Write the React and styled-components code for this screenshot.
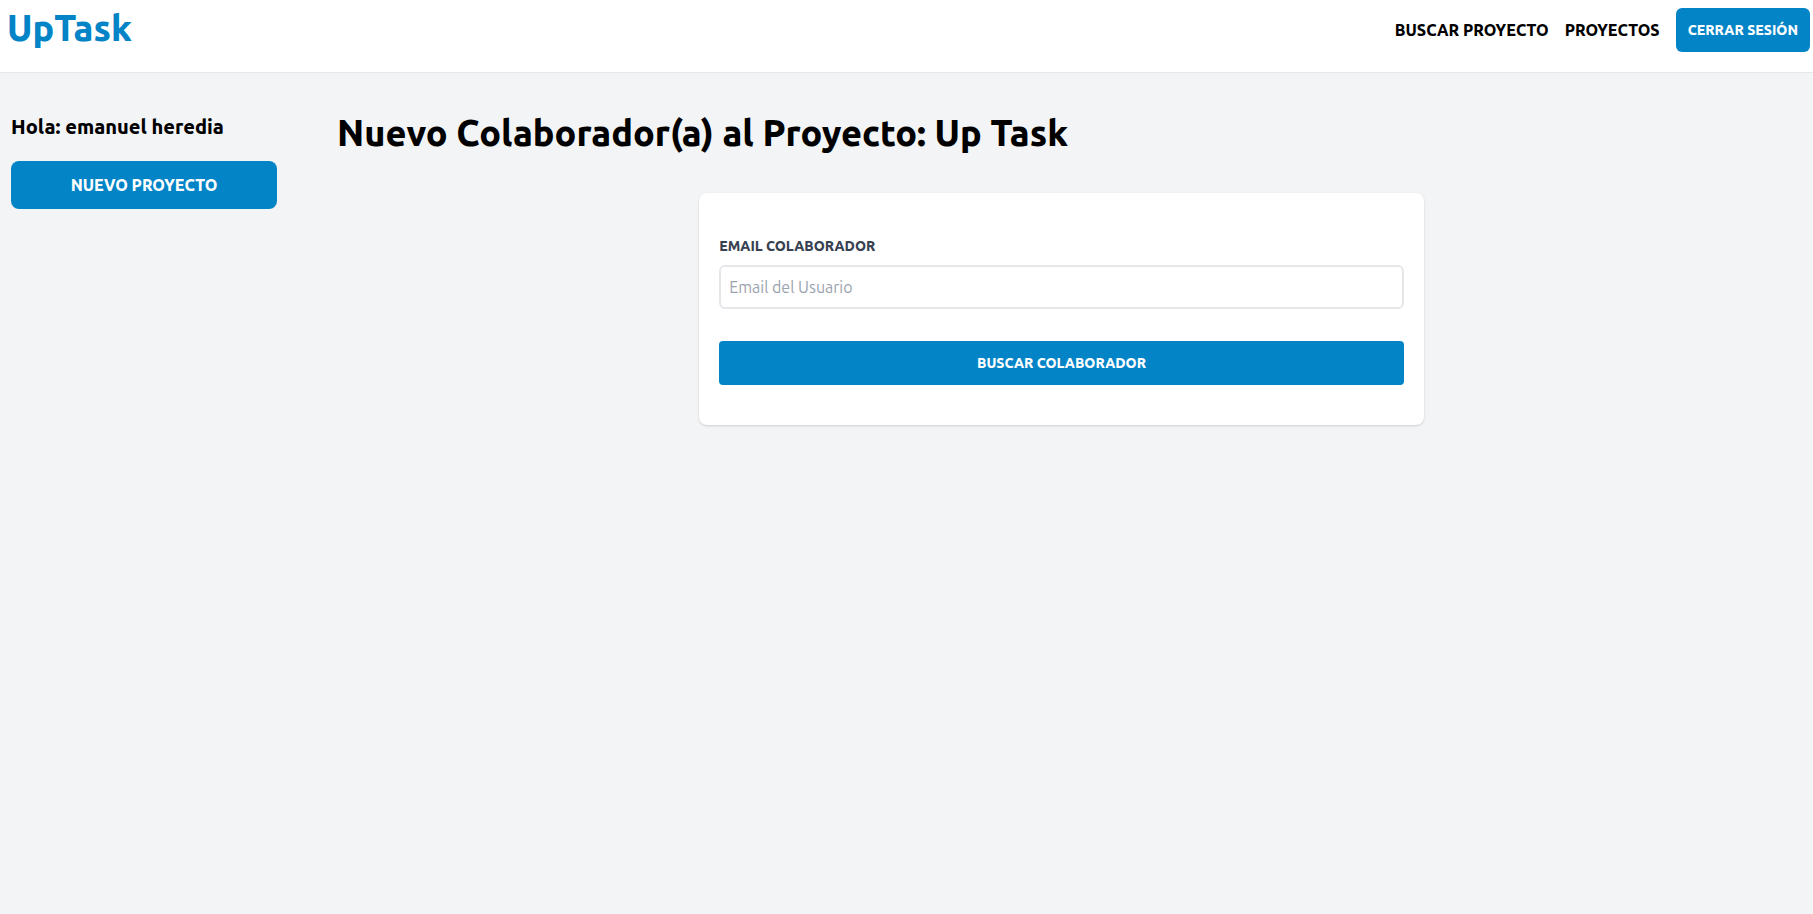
import React from "react";
import styled, { createGlobalStyle, css } from "styled-components";

const GlobalStyle = createGlobalStyle`
  *, *::before, *::after { box-sizing: border-box; }
  body {
    margin: 0;
    background: #f3f4f6;
    color: #000;
    font-family: Ubuntu, "Noto Sans", "Open Sans", sans-serif;
    font-size: 16px;
    line-height: 24px;
  }
  h1, h2, p { margin: 0; }
`;

const filled = css`
  border: 0;
  background: #0284c7;
  color: #fff;
  font-family: inherit;
  font-weight: 800;
  text-align: center;
  text-transform: uppercase;
  text-decoration: none;
  cursor: pointer;
  &:hover { background: #0369a1; }
`;

const Header = styled.header`
  display: flex;
  justify-content: space-between;
  align-items: flex-start;
  padding: 8px 3px 20px 7px;
  background: #fff;
  border-bottom: 1px solid #e5e7eb;
`;

const Logo = styled.h2`
  color: #0284c7;
  font-size: 36px;
  line-height: 40px;
  font-weight: 900;
`;

const Nav = styled.nav`
  display: flex;
  align-items: center;
  gap: 16px;
`;

const NavLink = styled.a`
  color: #000;
  font-weight: 800;
  text-transform: uppercase;
  text-decoration: none;
`;

const LogoutButton = styled.button`
  ${filled}
  padding: 12px;
  border-radius: 6px;
  font-size: 14px;
  line-height: 20px;
`;

const Body = styled.div`
  display: flex;
  align-items: flex-start;
`;

const Sidebar = styled.aside`
  flex: 0 0 297px;
  padding: 40px 20px 40px 11px;
`;

const Greeting = styled.p`
  font-size: 20px;
  line-height: 28px;
  font-weight: 800;
`;

const NewProjectLink = styled.a`
  ${filled}
  display: block;
  margin-top: 20px;
  padding: 12px;
  border-radius: 8px;
`;

const Main = styled.main`
  flex: 1;
  padding: 40px 27px 40px 40px;
`;

const Title = styled.h1`
  font-size: 36px;
  line-height: 40px;
  font-weight: 900;
`;

const Form = styled.form`
  width: 50%;
  margin: 40px auto 0;
  padding: 40px 20px;
  border-radius: 8px;
  background: #fff;
  box-shadow: 0 1px 3px rgba(0, 0, 0, 0.1), 0 1px 2px rgba(0, 0, 0, 0.06);
`;

const Field = styled.div`
  margin-bottom: 32px;
`;

const Label = styled.label`
  display: block;
  padding-top: 2px;
  color: #374151;
  font-size: 14px;
  line-height: 22px;
  font-weight: 800;
  text-transform: uppercase;
`;

const Input = styled.input`
  display: block;
  width: 100%;
  margin-top: 8px;
  padding: 8px;
  border: 2px solid #e5e7eb;
  border-radius: 6px;
  background: #fff;
  font: inherit;
  &::placeholder { color: #9ca3af; opacity: 1; }
`;

const SubmitButton = styled.button`
  ${filled}
  display: block;
  width: 100%;
  padding: 12px;
  border-radius: 4px;
  font-size: 14px;
  line-height: 20px;
`;

export default function App() {
  return (
    <>
      <GlobalStyle />
      <Header>
        <Logo>UpTask</Logo>
        <Nav>
          <NavLink href="#buscar">Buscar Proyecto</NavLink>
          <NavLink href="#proyectos">Proyectos</NavLink>
          <LogoutButton type="button">Cerrar Sesión</LogoutButton>
        </Nav>
      </Header>
      <Body>
        <Sidebar>
          <Greeting>Hola: emanuel heredia</Greeting>
          <NewProjectLink href="#crear-proyecto">Nuevo Proyecto</NewProjectLink>
        </Sidebar>
        <Main>
          <Title>Nuevo Colaborador(a) al Proyecto: Up Task</Title>
          <Form onSubmit={(event) => event.preventDefault()}>
            <Field>
              <Label htmlFor="email">Email Colaborador</Label>
              <Input id="email" type="email" placeholder="Email del Usuario" />
            </Field>
            <SubmitButton type="submit">Buscar Colaborador</SubmitButton>
          </Form>
        </Main>
      </Body>
    </>
  );
}
